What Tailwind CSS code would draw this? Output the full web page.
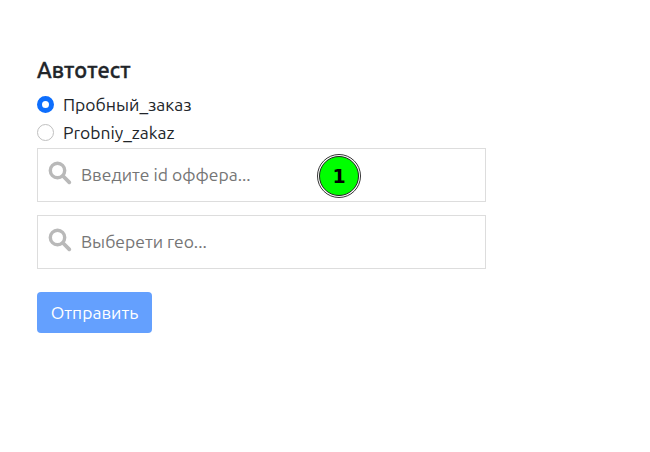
<!DOCTYPE html>
<html lang="ru">
<head>
<meta charset="utf-8">
<title>Автотест</title>
<script src="https://cdn.jsdelivr.net/npm/@tailwindcss/browser@4"></script>
</head>
<body class="bg-white text-[#212529] font-['Ubuntu','Noto_Sans',sans-serif] text-[17.5px]">
<form class="flex w-[486px] flex-col pl-[37px] pt-[56px]">
  <h1 class="h-[35px] text-[21.8px] leading-[28px] font-medium whitespace-nowrap [-webkit-text-stroke:0.4px_#212529]">Автотест</h1>
  <label class="flex h-[28px] items-center gap-[9px]">
    <span class="mb-px size-[17px] rounded-full border-[5px] border-[#0d6efd] bg-white"></span>
    <span class="leading-[28px] whitespace-nowrap">Пробный_заказ</span>
  </label>
  <label class="flex h-[28px] items-center gap-[9px]">
    <span class="mb-px size-[17px] rounded-full border border-[#bfbfbf] bg-white"></span>
    <span class="leading-[28px] whitespace-nowrap">Probniy_zakaz</span>
  </label>
  <div class="relative mt-px flex h-[54px] items-center border border-[#dddddd] pl-[10px]">
    <svg class="mb-[4px] size-[24px] shrink-0" viewBox="0 0 24 24" fill="none" stroke="#b9b9b9"><circle cx="9.5" cy="9.5" r="7.2" stroke-width="3.4"/><path d="M15 15l6.3 6.3" stroke-width="3.8" stroke-linecap="round"/></svg>
    <input class="mb-[2px] ml-[9px] h-[48px] w-[380px] outline-none placeholder:text-[#757575]" placeholder="Введите id оффера...">
    <div class="absolute left-[279px] top-[5px] flex size-[44px] items-center justify-center rounded-full border border-[#333] bg-white">
      <div class="flex size-[40px] items-center justify-center rounded-full border border-[#222] bg-[#00ff00] font-['DejaVu_Sans',sans-serif] text-[19px] leading-none font-bold text-black">1</div>
    </div>
  </div>
  <div class="mt-[13px] flex h-[54px] items-center border border-[#dddddd] pl-[10px]">
    <svg class="mb-[4px] size-[24px] shrink-0" viewBox="0 0 24 24" fill="none" stroke="#b9b9b9"><circle cx="9.5" cy="9.5" r="7.2" stroke-width="3.4"/><path d="M15 15l6.3 6.3" stroke-width="3.8" stroke-linecap="round"/></svg>
    <input class="mb-[2px] ml-[9px] h-[48px] w-[380px] outline-none placeholder:text-[#757575]" placeholder="Выберети гео...">
  </div>
  <button type="button" class="mt-[23px] h-[41px] w-[115px] rounded-[4px] bg-[#64a0fe] pt-[2px] text-center text-white">Отправить</button>
</form>
</body>
</html>
